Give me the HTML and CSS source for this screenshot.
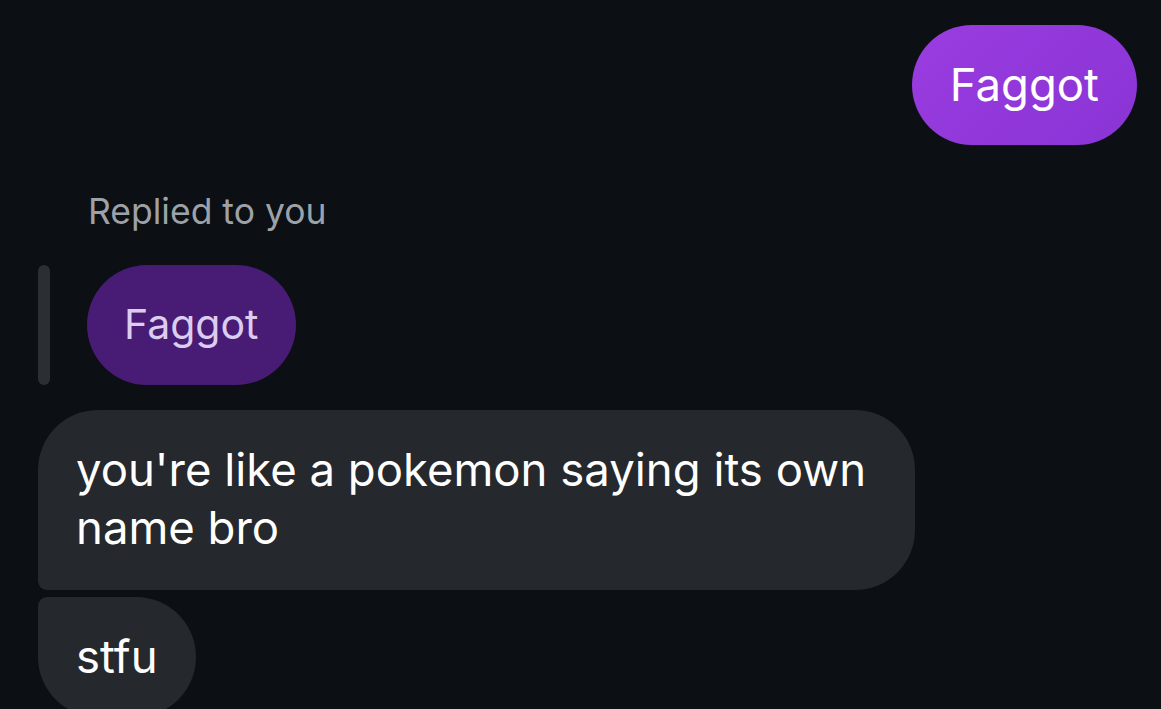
FILE: index.html
```html
<!DOCTYPE html>
<html lang="en">
<head>
<meta charset="utf-8">
<title>Chat</title>
<link rel="stylesheet" href="styles.css">
</head>
<body>
<main class="thread">
  <div class="row row-out">
    <div class="bubble bubble-out">Faggot</div>
  </div>
  <div class="reply-label">Replied to you</div>
  <div class="quote">
    <div class="quote-bar"></div>
    <div class="bubble bubble-quoted">Faggot</div>
  </div>
  <div class="row row-in">
    <div class="bubble bubble-in bubble-first">you're like a pokemon saying its own name bro</div>
  </div>
  <div class="row row-in row-next">
    <div class="bubble bubble-in bubble-last">stfu</div>
  </div>
</main>
</body>
</html>
```

FILE: styles.css
```css
html, body {
  margin: 0;
  padding: 0;
  background: #0c0f14;
  height: 100%;
  overflow: hidden;
}

.thread {
  display: flex;
  flex-direction: column;
  padding: 25px 24px 0 38px;
  font-family: "Inter", "Roboto", "Noto Sans", sans-serif;
  color: #ffffff;
}

.row {
  display: flex;
}

.row-out {
  justify-content: flex-end;
}

.row-in {
  justify-content: flex-start;
  margin-top: 25px;
}

.row-next {
  margin-top: 7px;
}

.bubble {
  font-size: 45.5px;
  line-height: 58px;
  padding: 31px 38px;
  border-radius: 60px;
  box-sizing: border-box;
  white-space: nowrap;
}

.bubble-out {
  background: linear-gradient(135deg, #9a3ce0, #8a34d6);
  height: 120px;
}

.reply-label {
  margin-top: 47px;
  padding-left: 50px;
  font-size: 35.5px;
  line-height: 40px;
  color: #9da2a8;
}

.quote {
  display: flex;
  align-items: stretch;
  gap: 37px;
  margin-top: 33px;
}

.quote-bar {
  width: 12px;
  border-radius: 6px;
  background: #2b2e33;
}

.bubble-quoted {
  background: #481c74;
  color: #dccdf0;
  font-size: 41px;
  padding: 30px 37px;
  height: 120px;
}

.bubble-in {
  background: #25282c;
}

.bubble-first {
  width: 877px;
  white-space: normal;
  border-radius: 60px 60px 60px 9px;
  padding: 31px 40px 33px 38px;
}

.bubble-last {
  border-radius: 9px 60px 60px 60px;
  height: 120px;
}
```
